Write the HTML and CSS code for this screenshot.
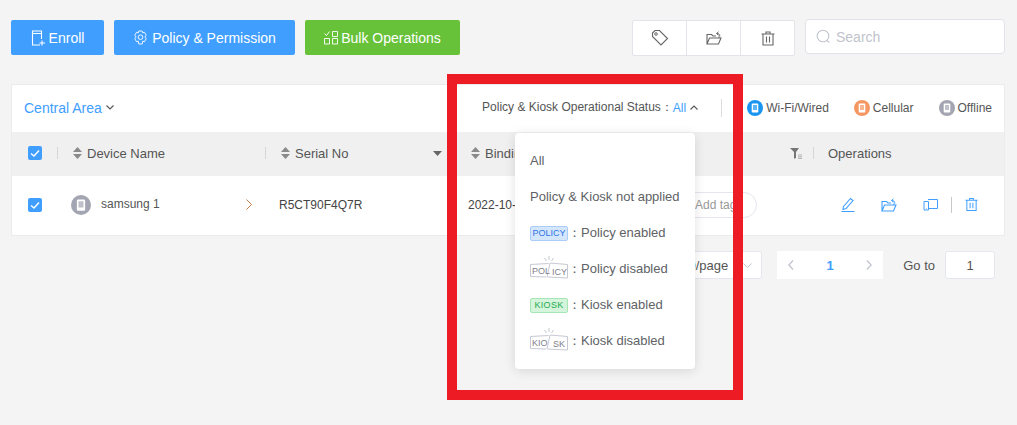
FILE: index.html
```html
<!DOCTYPE html>
<html lang="en">
<head>
<meta charset="utf-8">
<title>Devices</title>
<link rel="stylesheet" href="styles.css">
</head>
<body>
<svg class="defs" width="0" height="0" aria-hidden="true">
  <symbol id="folder" viewBox="0 0 16 14"><path d="M1 13V3.500h4.500L7 5h3M1 13h11.500L15 7H3.500ZM13 7V5.500" fill="none" stroke="currentColor" stroke-width="1.100"/><path d="M13.800 5.500C13.800 3.500 12.800 2.500 10.800 2.500M12.500.800l-2 1.700 2 1.700" fill="none" stroke="currentColor" stroke-width="1"/></symbol>
  <symbol id="trash" viewBox="0 0 14 15"><path d="M.5 3h13M5 3V1h4v2M2 3v11h10V3M5.500 5.500v6M8.500 5.500v6" fill="none" stroke="currentColor" stroke-width="1.100"/></symbol>
  <symbol id="sort" viewBox="0 0 9 12"><path d="M4.500 0 9 5H0ZM0 7h9l-4.500 5Z" fill="currentColor"/></symbol>
  <symbol id="check" viewBox="0 0 14 14"><path d="M3 7.500 6 10l5-5.500" fill="none" stroke="#fff" stroke-width="1.400"/></symbol>
  <symbol id="device" viewBox="0 0 16 16"><circle cx="8" cy="8" r="8" fill="currentColor"/><rect x="4.700" y="3.500" width="6.600" height="9" rx="1" fill="#fff"/><rect x="6" y="5" width="4" height="5" fill="currentColor" opacity=".7"/></symbol>
</svg>

<header class="toolbar">
  <button class="btn btn-blue btn-enroll">
    <svg class="ico" width="15" height="16" viewBox="0 0 15 16"><path d="M9 15H1.500V1h9v8M1.500 3.500h9M11 10.500v5M8.500 13h5.500" fill="none" stroke="#fff" stroke-width="1.100"/></svg>Enroll
  </button>
  <button class="btn btn-blue btn-policy">
    <svg class="ico" width="15" height="15" viewBox="0 0 15 15"><path d="M5.800 1h3.400l.5 1.800 1.800-.5 1.700 3-1.300 1.700 1.300 1.700-1.700 3-1.800-.5-.5 2.800H5.800l-.5-2.800-1.800.5-1.700-3L3.100 7 1.800 5.300l1.700-3 1.800.5Z" fill="none" stroke="#fff" stroke-width=".9"/><circle cx="7.500" cy="7.200" r="2.300" fill="none" stroke="#fff" stroke-width=".9"/></svg>Policy &amp; Permission
  </button>
  <button class="btn btn-green">
    <svg class="ico" width="14" height="15" viewBox="0 0 14 15"><path d="M.5 3.500 2.500 5.500 5.500 1.500M8.500 1.500h5v5h-5ZM.5 8.500h5v5.500h-5ZM8.500 8.500h5v5.500h-5Z" fill="none" stroke="#fff" stroke-width=".9"/></svg>Bulk Operations
  </button>
  <div class="tools">
    <div class="tool-group">
      <span class="tool"><svg width="18" height="18" viewBox="0 0 18 18"><path d="M1.500 4 4 1.500h4.500l8 8-6.500 6.500-8.500-8.500Z" fill="none" stroke="currentColor" stroke-width="1.100"/><circle cx="5" cy="5" r="1.300" fill="none" stroke="currentColor"/></svg></span>
      <span class="tool"><svg width="16" height="14"><use href="#folder"/></svg></span>
      <span class="tool"><svg width="14" height="15"><use href="#trash"/></svg></span>
    </div>
    <label class="search">
      <svg width="15" height="15" viewBox="0 0 15 15"><circle cx="7" cy="7" r="5.800" fill="none" stroke="currentColor" stroke-width="1.100"/><path d="m11 11.300 2.300 2.300" stroke="currentColor" stroke-width="1.100"/></svg>
      <span>Search</span>
    </label>
  </div>
</header>

<main class="card">
  <div class="card-head">
    <span class="area">Central Area<svg class="chev" width="8" height="5" viewBox="0 0 8 5"><path d="M.5.500 4 4 7.500.500" fill="none" stroke="#555" stroke-width="1.100"/></svg></span>
    <div class="status-filter">
      <span class="status-label">Policy &amp; Kiosk Operational Status：<em>All</em><svg class="chev" width="8" height="5" viewBox="0 0 8 5"><path d="M.5 4.500 4 1l3.500 3.500" fill="none" stroke="#555" stroke-width="1.100"/></svg></span>
      <span class="vr"></span>
      <span class="legend legend-wifi"><svg width="16" height="16"><use href="#device"/></svg>Wi-Fi/Wired</span>
      <span class="legend legend-cell"><svg width="16" height="16"><use href="#device"/></svg>Cellular</span>
      <span class="legend legend-off"><svg width="16" height="16"><use href="#device"/></svg>Offline</span>
    </div>
  </div>

  <div class="row row-head">
    <div class="cell"><span class="checkbox"><svg width="14" height="14"><use href="#check"/></svg></span></div>
    <div class="cell divided"><svg class="sort" width="9" height="12"><use href="#sort"/></svg>Device Name</div>
    <div class="cell divided">
      <svg class="sort" width="9" height="12"><use href="#sort"/></svg>Serial No
      <svg class="caret" width="9" height="5" viewBox="0 0 9 5"><path d="M0 0h9L4.500 5Z" fill="currentColor"/></svg>
    </div>
    <div class="cell cell-bind">
      <svg class="sort" width="9" height="12"><use href="#sort"/></svg>Binding
      <svg class="funnel" width="12" height="11" viewBox="0 0 12 11"><path d="M0 0h9L6 4v6l-2 .8V4Z" fill="#757575"/><path d="M8 7h4M8 8.800h4M8 10.400h4" stroke="#aaa" stroke-width=".9"/></svg>
    </div>
    <div class="cell divided cell-ops">Operations</div>
  </div>

  <div class="row row-body">
    <div class="cell"><span class="checkbox"><svg width="14" height="14"><use href="#check"/></svg></span></div>
    <div class="cell cell-device">
      <svg class="avatar" width="20" height="20"><use href="#device"/></svg>
      <span class="device-name">samsung 1</span>
      <svg class="arrow" width="6" height="11" viewBox="0 0 6 11"><path d="m.5.500 5 5-5 5" fill="none" stroke="#c07c48" stroke-width="1"/></svg>
    </div>
    <div class="cell cell-serial">R5CT90F4Q7R</div>
    <div class="cell cell-date">2022-10-12 10:20<span class="tag">Add tag</span></div>
    <div class="cell cell-actions">
      <svg width="14" height="15" viewBox="0 0 14 15"><path d="M2.500 9.500 9.500 1.500l2.500 2-7 8-3 1ZM.5 14.500h13" fill="none" stroke="currentColor" stroke-width="1.100"/></svg>
      <svg width="16" height="14"><use href="#folder"/></svg>
      <svg width="15" height="13" viewBox="0 0 15 13"><path d="M5 1.500h9.500v9H6M1 3.500h4.500v8.500H1ZM3 10.500h.5" fill="none" stroke="currentColor" stroke-width="1"/></svg>
      <span class="action-sep"></span>
      <svg width="13" height="15" viewBox="0 0 14 15"><use href="#trash" width="14" height="15"/></svg>
    </div>
  </div>
</main>

<footer class="pager">
  <span class="page-size">10/page<svg width="9" height="5" viewBox="0 0 9 5"><path d="M.5.500 4.500 4.500l4-4" fill="none" stroke="#c0c4cc"/></svg></span>
  <span class="pages">
    <svg width="6" height="10" viewBox="0 0 6 10"><path d="M5 .5.800 5 5 9.500" fill="none" stroke="#c0c4cc" stroke-width="1.300"/></svg>
    <b>1</b>
    <svg width="6" height="10" viewBox="0 0 6 10"><path d="M1 .5 5.200 5 1 9.500" fill="none" stroke="#c0c4cc" stroke-width="1.300"/></svg>
  </span>
  <span class="goto">Go to</span>
  <span class="goto-box">1</span>
</footer>

<div class="highlight"></div>

<div class="popover">
  <div class="opt">All</div>
  <div class="opt">Policy &amp; Kiosk not applied</div>
  <div class="opt opt-icon"><span class="badge badge-policy">POLICY</span>：Policy enabled</div>
  <div class="opt opt-icon">
    <svg class="broken" width="38" height="23" viewBox="0 0 38 23"><path d="M18.500 7.500 .5 8.500v12l15.500.5M20 7l17.500 1.500v13.500L17.500 21" fill="none" stroke="#c6c8d4"/><path d="M19 0v4M14.500 2l2 3M23.500 2l-2 3M20 7l-3 14" stroke="#c6c8d4"/><text x="2" y="18" class="broken-text">POL</text><text x="22" y="19" class="broken-text">ICY</text></svg>：Policy disabled
  </div>
  <div class="opt opt-icon"><span class="badge badge-kiosk">KIOSK</span>：Kiosk enabled</div>
  <div class="opt opt-icon">
    <svg class="broken" width="38" height="23" viewBox="0 0 38 23"><path d="M18.500 7.500 .5 8.500v12l15.500.5M20 7l17.500 1.500v13.500L17.500 21" fill="none" stroke="#c6c8d4"/><path d="M19 0v4M14.500 2l2 3M23.500 2l-2 3M20 7l-3 14" stroke="#c6c8d4"/><text x="2" y="18" class="broken-text">KIO</text><text x="23" y="19" class="broken-text">SK</text></svg>：Kiosk disabled
  </div>
</div>
</body>
</html>
```
FILE: styles.css
```css
* { box-sizing: border-box; }
html, body { margin: 0; height: 100%; }
body {
  position: relative;
  width: 1017px;
  height: 425px;
  overflow: hidden;
  background: #f4f4f4;
  font-family: "Liberation Sans", Arial, sans-serif;
  font-size: 12px;
  color: #555;
  padding: 20px 12px 0 11px;
}
.defs { position: absolute; }
svg { flex: none; display: block; }

.toolbar { display: flex; align-items: flex-start; height: 64px; gap: 10px; }
.btn {
  display: flex;
  align-items: center;
  justify-content: center;
  height: 35px;
  border: 0;
  border-radius: 2px;
  color: #fff;
  font: 14px "Liberation Sans", Arial, sans-serif;
  padding: 0;
  gap: 4px;
}
.btn-blue { background: #409eff; }
.btn-green { background: #67c23a; width: 155px; gap: 3px; }
.btn-enroll { width: 93px; gap: 3px; }
.btn-policy { width: 181px; }

.tools { margin-left: auto; display: flex; gap: 10px; align-items: flex-start; }
.tool-group {
  display: flex;
  width: 163px;
  height: 36px;
  background: #fff;
  border: 1px solid #e2e4ea;
  border-radius: 2px;
}
.tool {
  flex: 1;
  display: flex;
  align-items: center;
  justify-content: center;
  color: #666;
}
.tool + .tool { border-left: 1px solid #e2e4ea; }
.search {
  display: flex;
  align-items: center;
  gap: 5px;
  width: 200px;
  height: 35px;
  margin-top: -1px;
  padding-left: 10px;
  background: #fff;
  border: 1px solid #e0e3ea;
  border-radius: 4px;
  color: #c0c4cc;
  font-size: 14px;
}

.card { width: 994px; background: #fff; border: 1px solid #ebebeb; }
.card-head {
  display: flex;
  align-items: center;
  justify-content: space-between;
  height: 47px;
  padding: 0 12px 2px;
}
.area { display: flex; align-items: center; gap: 4px; color: #409eff; font-size: 14px; }
.status-filter { display: flex; align-items: center; }
.status-label { display: flex; align-items: center; color: #555; }
.status-label em { font-style: normal; color: #409eff; margin-right: 4px; }
.vr { width: 1px; height: 18px; background: #ddd; margin: 0 25px 0 23px; }
.legend { display: flex; align-items: center; gap: 3px; }
.legend-wifi { color: #555; margin-right: 25px; }
.legend-wifi svg { color: #1a96f0; }
.legend-cell { margin-right: 25px; }
.legend-cell svg { color: #f59762; }
.legend-off svg { color: #a3a6b2; }

.row { display: grid; grid-template-columns: 45px 208px 198px 350px 191px; }
.row-head { height: 44px; background: #f0f0f0; color: #555; font-size: 13px; }
.row-body { height: 59px; }
.cell { display: flex; align-items: center; position: relative; }
.row-head .cell { padding-bottom: 2px; }
.row-body .cell { padding-bottom: 2px; }
.row .cell:first-child { padding-left: 16px; }
.divided::before {
  content: "";
  width: 1px;
  height: 12px;
  background: #d6d6d6;
  margin-right: 15px;
}
.checkbox {
  width: 14px;
  height: 14px;
  background: #409eff;
  border-radius: 2px;
}
.sort { color: #8a8a8a; margin-right: 5px; }
.caret { color: #666; margin-left: auto; margin-right: 21px; }
.cell-bind { padding-left: 8px; }
.funnel { margin-left: auto; margin-right: 11px; }
.cell-ops::before { margin-right: 14px; }

.cell-device { padding-left: 14px; }
.avatar { color: #a3a6b2; }
.device-name { margin-left: 10px; margin-top: -2px; }
.arrow { margin-left: auto; margin-right: 13px; }
.cell-serial { padding-left: 14px; color: #444; }
.cell-date { padding-left: 5px; color: #444; }
.tag {
  display: flex;
  align-items: center;
  width: 112px;
  height: 26px;
  margin-left: auto;
  margin-right: 56px;
  padding-left: 49px;
  border: 1px solid #e5e5ee;
  border-radius: 13px;
  color: #999;
}
.cell-actions { padding-left: 28px; color: #409eff; gap: 26px; }
.action-sep { width: 1px; height: 16px; background: #c8c8c8; margin: 0 -13px; }

.pager {
  display: flex;
  align-items: center;
  justify-content: flex-end;
  width: 984px;
  height: 28px;
  margin-top: 15px;
  font-size: 13px;
}
.page-size {
  display: flex;
  align-items: center;
  justify-content: space-between;
  width: 90px;
  height: 28px;
  padding: 0 9px 0 8px;
  background: #fff;
  border: 1px solid #e4e7ed;
  border-radius: 3px;
  margin-right: 15px;
}
.pages {
  display: flex;
  align-items: center;
  justify-content: space-between;
  width: 106px;
  height: 28px;
  padding: 0 11px;
  background: #fff;
}
.pages b { color: #409eff; font-size: 13px; }
.goto { margin: 0 10px 0 20px; }
.goto-box {
  display: flex;
  align-items: center;
  justify-content: center;
  width: 50px;
  height: 28px;
  background: #fff;
  border: 1px solid #e4e7ed;
  border-radius: 3px;
}

.highlight {
  position: absolute;
  left: 447px;
  top: 74px;
  width: 296px;
  height: 326px;
  border: 10px solid #ed1c24;
}
.popover {
  position: absolute;
  left: 515px;
  top: 133px;
  width: 180px;
  height: 236px;
  padding: 9px 15px;
  background: #fff;
  border-radius: 4px;
  box-shadow: 0 2px 12px rgba(0, 0, 0, .12);
  font-size: 13px;
  color: #606266;
}
.opt { display: flex; align-items: center; height: 36px; white-space: nowrap; }
.opt-icon { padding-top: 2px; }
.badge {
  display: block;
  width: 38px;
  height: 15px;
  border-radius: 2px;
  font-size: 9px;
  line-height: 13px;
  text-align: center;
  border: 1px solid;
}
.badge-policy { color: #2e74e6; background: #d4e6fc; border-color: #a9cdf8; }
.badge-kiosk { color: #1fa84f; background: #d4f5dc; border-color: #a5e6b6; letter-spacing: .3px; }
.broken { margin-top: -3px; }
.broken-text { font-size: 9px; fill: #80808c; }
```
